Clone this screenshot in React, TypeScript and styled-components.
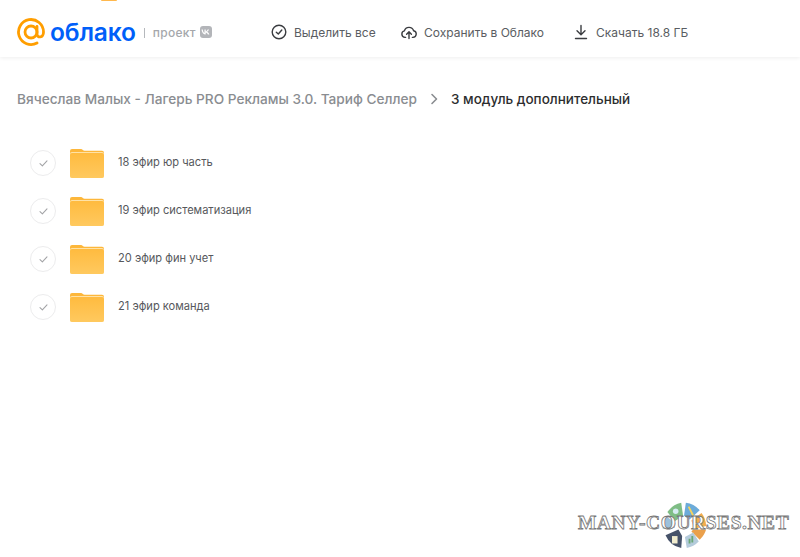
import React from 'react';
import styled, { createGlobalStyle } from 'styled-components';

const GlobalStyle = createGlobalStyle`
  html, body {
    margin: 0;
    padding: 0;
    background: #fff;
    font-family: Inter, "Noto Sans", sans-serif;
  }
`;

const Page = styled.div`
  position: relative;
  width: 800px;
  height: 557px;
  overflow: hidden;
  background: #fff;
`;

const TopMark = styled.div`
  position: absolute;
  left: 101px;
  top: 0;
  width: 16px;
  height: 1px;
  background: #ffb84d;
  border-radius: 0 0 8px 8px;
`;

const Header = styled.header`
  display: flex;
  align-items: center;
  height: 57px;
  padding: 7px 0 0 17px;
  box-sizing: border-box;
  background: #fff;
  box-shadow: 0 1px 4px rgba(0, 0, 0, 0.07);
`;

const Brand = styled.div`
  display: flex;
  align-items: center;
  width: 254px;
`;

const BrandName = styled.span`
  margin-left: 5px;
  font-size: 24.5px;
  font-weight: 600;
  letter-spacing: -0.15px;
  color: #005ff9;
  line-height: 28px;
`;

const Divider = styled.span`
  width: 1px;
  height: 10px;
  margin: 1px 8px 0 8px;
  background: #b5b8bc;
`;

const Project = styled.span`
  font-size: 12px;
  font-weight: 500;
  letter-spacing: 0.3px;
  color: #a5a7ab;
`;

const VkBadge = styled.span`
  display: flex;
  align-items: center;
  justify-content: center;
  width: 12px;
  height: 12px;
  margin-left: 4px;
  border-radius: 3px;
  background: #b3b5b9;
`;

const Actions = styled.nav`
  display: flex;
  align-items: center;
`;

const Action = styled.div<{ $width: number }>`
  display: flex;
  align-items: center;
  gap: 7px;
  width: ${(p) => p.$width}px;
  font-size: 12px;
  color: #5a5d62;
  white-space: nowrap;
`;

const Main = styled.main`
  padding: 34px 0 0 17px;
`;

const Breadcrumbs = styled.div`
  display: flex;
  align-items: center;
  height: 16px;
  font-weight: 500;
  white-space: nowrap;
`;

const Crumb = styled.span<{ $current?: boolean }>`
  font-size: ${(p) => (p.$current ? '13.5px' : '13.67px')};
  color: ${(p) => (p.$current ? '#2c2d2e' : '#8a8d91')};
`;

const CrumbArrow = styled.svg`
  margin: 0 12px 0 13px;
`;

const FolderList = styled.ul`
  list-style: none;
  margin: 0;
  padding: 31px 0 0 13px;
`;

const FolderRow = styled.li`
  display: flex;
  align-items: center;
  height: 48px;
`;

const CheckCircle = styled.span`
  display: flex;
  align-items: center;
  justify-content: center;
  width: 26px;
  height: 26px;
  margin-top: 2px;
  margin-right: 14px;
  box-sizing: border-box;
  border: 1px solid #ececed;
  border-radius: 50%;
`;

const FolderGraphic = styled.svg`
  margin-top: 3px;
`;

const FolderName = styled.span`
  margin-left: 14px;
  font-size: 11.1px;
  color: #56585c;
`;

const Watermark = styled.div`
  position: absolute;
  left: 578px;
  top: 498px;
  width: 222px;
  height: 54px;
`;

const WatermarkLogo = styled.svg`
  position: absolute;
  left: 82px;
  top: 2px;
`;

const WatermarkText = styled.span`
  position: absolute;
  left: 0;
  top: 14px;
  font-family: "Liberation Serif", serif;
  font-size: 19.5px;
  font-weight: 700;
  letter-spacing: 0.55px;
  line-height: 22px;
  color: #fff;
  -webkit-text-stroke: 0.8px #777;
  white-space: nowrap;
`;

const folders = ['18 эфир юр часть', '19 эфир систематизация', '20 эфир фин учет', '21 эфир команда'];

const FolderIcon = () => (
  <FolderGraphic width="34" height="29" viewBox="0 0 34 29">
    <defs>
      <linearGradient id="folderFill" x1="0" y1="0" x2="0" y2="1">
        <stop offset="0" stopColor="#ffbb3f" />
        <stop offset="1" stopColor="#ffc95f" />
      </linearGradient>
    </defs>
    <path d="M0 2a2 2 0 0 1 2-2h9c1.500 0 2.200 1.800 3.600 1.800H32a2 2 0 0 1 2 2V10H0z" fill="#fdb73b" />
    <rect x="0" y="3" width="34" height="26" rx="2" fill="#ffe2a6" />
    <rect x="0" y="4" width="34" height="25" rx="2" fill="url(#folderFill)" />
  </FolderGraphic>
);

const App: React.FC = () => (
  <Page>
    <GlobalStyle />
    <Header>
      <Brand>
        <svg width="28" height="28" viewBox="0 0 28 28" fill="none">
          <circle cx="14" cy="14" r="6" stroke="#ff9e00" strokeWidth="2.800" />
          <path
            d="M20 8.500v7.500c0 4.200 6.500 4.200 6.500-2A12.500 12.500 0 1 0 20 25"
            stroke="#ff9e00"
            strokeWidth="2.800"
            strokeLinecap="round"
          />
        </svg>
        <BrandName>облако</BrandName>
        <Divider />
        <Project>проект</Project>
        <VkBadge>
          <svg width="9" height="6" viewBox="0 0 9 6">
            <path d="M0.500 0.500c.3 3 2 5 4.200 5V3.500c1 .1 1.800 1 2.200 2h1.500c-.5-1.300-1.400-2.200-2.200-2.700.7-.5 1.500-1.300 1.800-2.300H6.600c-.3 1-1 1.800-1.900 2V.5H3.500v3.500C2.700 3.700 1.900 2.500 1.800.5z" fill="#fff" />
          </svg>
        </VkBadge>
      </Brand>
      <Actions>
        <Action $width={130}>
          <svg width="16" height="16" viewBox="0 0 16 16" fill="none" stroke="#3a3c40" strokeWidth="1.400" strokeLinecap="round" strokeLinejoin="round">
            <circle cx="8" cy="8" r="6.800" />
            <path d="M5.300 8.200l2 1.800 3.500-4" />
          </svg>
          Выделить все
        </Action>
        <Action $width={172}>
          <svg width="16" height="16" viewBox="0 0 16 16" fill="none" stroke="#3a3c40" strokeWidth="1.400" strokeLinecap="round" strokeLinejoin="round">
            <path d="M4.600 13.400H4A3.300 3.300 0 0 1 3.400 6.900 4.800 4.800 0 0 1 12.600 6.700 3.400 3.400 0 0 1 12 13.400h-.6" />
            <path d="M8 14.500V8M5.600 10.200L8 7.800l2.400 2.400" />
          </svg>
          Сохранить в Облако
        </Action>
        <Action $width={120}>
          <svg width="16" height="16" viewBox="0 0 16 16" fill="none" stroke="#3a3c40" strokeWidth="1.400" strokeLinecap="round" strokeLinejoin="round">
            <path d="M8 1.500v9M4 6.800l4 4 4-4M2.500 14.500h11" />
          </svg>
          Скачать 18.8 ГБ
        </Action>
      </Actions>
    </Header>
    <Main>
      <Breadcrumbs>
        <Crumb>Вячеслав Малых - Лагерь PRO Рекламы 3.0. Тариф Селлер</Crumb>
        <CrumbArrow width="9" height="12" viewBox="0 0 9 12" fill="none" stroke="#8a8d91" strokeWidth="1.600" strokeLinecap="round" strokeLinejoin="round">
          <path d="M2 1.500L6.500 6 2 10.500" />
        </CrumbArrow>
        <Crumb $current>3 модуль дополнительный</Crumb>
      </Breadcrumbs>
      <FolderList>
        {folders.map((name) => (
          <FolderRow key={name}>
            <CheckCircle>
              <svg width="9" height="7" viewBox="0 0 10 8" fill="none" stroke="#a2a3a6" strokeWidth="1.200" strokeLinecap="round" strokeLinejoin="round">
                <path d="M1 4.200L3.700 6.800 9 1" />
              </svg>
            </CheckCircle>
            <FolderIcon />
            <FolderName>{name}</FolderName>
          </FolderRow>
        ))}
      </FolderList>
    </Main>
    <TopMark />
    <Watermark>
      <WatermarkLogo width="48" height="50" viewBox="0 0 52 52">
        <path d="M8 12A24 24 0 0 1 23 2l2 14-9 6z" fill="#7fbd85" />
        <circle cx="17" cy="11" r="3" fill="#d6ecf2" />
        <path d="M28 2a24 24 0 0 1 15 8l-11 10-6-4z" fill="#6cabd9" />
        <path d="M31 6l5 10" stroke="#f4d35e" strokeWidth="2" />
        <path d="M45 13a24 24 0 0 1 5 14l-13 3-3-9z" fill="#f2ac4e" />
        <path d="M50 31a24 24 0 0 1-7 11L34 33l2-2z" fill="#eaa04c" />
        <path d="M6 16a24 24 0 0 0-3 14l13-1 1-5z" fill="#9cc0da" />
        <path d="M6 37l14-6 4 7-1 13A24 24 0 0 1 6 37z" fill="#465269" />
        <rect x="13" y="38" width="6" height="8" fill="#f2edcf" />
        <path d="M27 39l9-5 6 10a24 24 0 0 1-13 7z" fill="#b4cbdb" />
        <path d="M32 46v-5M35 45v-7" stroke="#6aa775" strokeWidth="2" />
      </WatermarkLogo>
      <WatermarkText>MANY-COURSES.NET</WatermarkText>
    </Watermark>
  </Page>
);

export default App;
